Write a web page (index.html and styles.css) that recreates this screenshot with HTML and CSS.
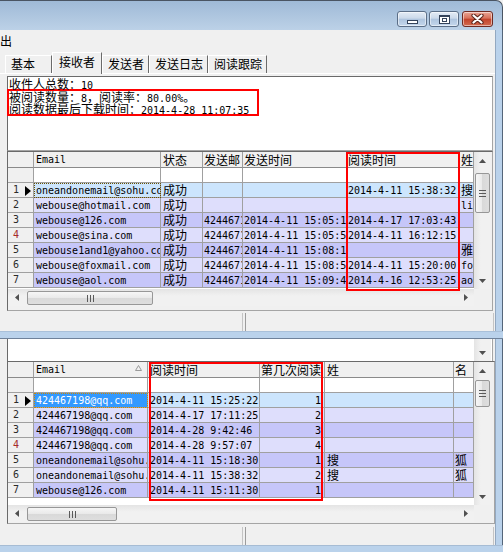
FILE: index.html
```html
<!DOCTYPE html>
<html>
<head>
<meta charset="utf-8">
<link rel="stylesheet" href="styles.css">
</head>
<body>
<div class="screen">
  <div class="win-top">
    <div class="titlebar">
      <div class="tbtn"><span class="g-min"></span></div>
      <div class="tbtn"><span class="g-max"></span></div>
      <div class="tbtn tclose"><svg width="13" height="10" viewBox="0 0 13 10"><path d="M2.5 1.5L10.5 8.5M10.5 1.5L2.5 8.5" stroke="#5a241b" stroke-width="4.2" stroke-linecap="round"/><path d="M2.5 1.5L10.5 8.5M10.5 1.5L2.5 8.5" stroke="#fff" stroke-width="2.2" stroke-linecap="round"/></svg></div>
    </div>
    <div class="winrow">
      <div class="client">
        <div class="menubar"><span>出</span></div>
        <div class="tabs">
          <div class="tab tab-first">基本</div>
          <div class="tab tab-sel">接收者</div>
          <div class="tab">发送者</div>
          <div class="tab">发送日志</div>
          <div class="tab">阅读跟踪</div>
        </div>
        <div class="sheet">
          <div class="info">
            <div class="ln">收件人总数：<span class="m">10</span></div>
            <div class="hl">
              <div class="ln">被阅读数量：<span class="m">8</span>，阅读率：<span class="m">80.00%</span>。</div>
              <div class="ln">阅读数据最后下载时间：<span class="m">2014-4-28 11:07:35</span></div>
            </div>
          </div>
          <div class="grid g1">
            <div class="grid-main g1-main">
              <div class="tbl">
                <div class="hdr">
                  <div class="c ind"></div>
                  <div class="c a-email">Email</div>
                  <div class="c a-state cn">状态</div>
                  <div class="c a-from cn">发送邮</div>
                  <div class="c a-sent cn">发送时间</div>
                  <div class="c a-read cn">阅读时间</div>
                  <div class="c a-last cn">姓</div>
                </div>
                <div class="flt">
                  <div class="c ind"></div>
                  <div class="c a-email"></div>
                  <div class="c a-state"></div>
                  <div class="c a-from"></div>
                  <div class="c a-sent"></div>
                  <div class="c a-read"></div>
                  <div class="c a-last"></div>
                </div>
                <div class="row r-sel">
                  <div class="c ind"><span class="rn">1</span><svg class="cur" width="6" height="10" viewBox="0 0 6 10"><path d="M0 0L6 5L0 10z" fill="#000"/></svg></div>
                  <div class="c a-email focus-soft">oneandonemail@sohu.com</div>
                  <div class="c a-state cn">成功</div>
                  <div class="c a-from"></div>
                  <div class="c a-sent"></div>
                  <div class="c a-read">2014-4-11 15:38:32</div>
                  <div class="c a-last cn">搜</div>
                </div>
                <div class="row r-a">
                  <div class="c ind"><span class="rn">2</span></div>
                  <div class="c a-email">webouse@hotmail.com</div>
                  <div class="c a-state cn">成功</div>
                  <div class="c a-from"></div>
                  <div class="c a-sent"></div>
                  <div class="c a-read"></div>
                  <div class="c a-last">li</div>
                </div>
                <div class="row r-b">
                  <div class="c ind"><span class="rn">3</span></div>
                  <div class="c a-email">webouse@126.com</div>
                  <div class="c a-state cn">成功</div>
                  <div class="c a-from">424467198@qq.com</div>
                  <div class="c a-sent">2014-4-11 15:05:12</div>
                  <div class="c a-read">2014-4-17 17:03:43</div>
                  <div class="c a-last"></div>
                </div>
                <div class="row r-a">
                  <div class="c ind"><span class="rn rn-red">4</span></div>
                  <div class="c a-email">webouse@sina.com</div>
                  <div class="c a-state cn">成功</div>
                  <div class="c a-from">424467198@qq.com</div>
                  <div class="c a-sent">2014-4-11 15:05:53</div>
                  <div class="c a-read">2014-4-11 16:12:15</div>
                  <div class="c a-last"></div>
                </div>
                <div class="row r-b">
                  <div class="c ind"><span class="rn">5</span></div>
                  <div class="c a-email">webouse1and1@yahoo.com</div>
                  <div class="c a-state cn">成功</div>
                  <div class="c a-from">424467198@qq.com</div>
                  <div class="c a-sent">2014-4-11 15:08:16</div>
                  <div class="c a-read"></div>
                  <div class="c a-last cn">雅</div>
                </div>
                <div class="row r-a">
                  <div class="c ind"><span class="rn">6</span></div>
                  <div class="c a-email">webouse@foxmail.com</div>
                  <div class="c a-state cn">成功</div>
                  <div class="c a-from">424467198@qq.com</div>
                  <div class="c a-sent">2014-4-11 15:08:54</div>
                  <div class="c a-read">2014-4-11 15:20:00</div>
                  <div class="c a-last">fo</div>
                </div>
                <div class="row r-b">
                  <div class="c ind"><span class="rn">7</span></div>
                  <div class="c a-email">webouse@aol.com</div>
                  <div class="c a-state cn">成功</div>
                  <div class="c a-from">424467198@qq.com</div>
                  <div class="c a-sent">2014-4-11 15:09:41</div>
                  <div class="c a-read">2014-4-16 12:53:25</div>
                  <div class="c a-last">ao</div>
                </div>
              </div>
              <div class="vscroll">
                <div class="sbtn"><svg width="7" height="4" viewBox="0 0 7 4"><path d="M3.5 0L7 4H0z" fill="#505050"/></svg></div>
                <div class="vtrack">
                  <div class="vthumb vt1"><svg width="7" height="7" viewBox="0 0 7 7"><path d="M0 0.5H7M0 3.5H7M0 6.5H7" stroke="#5a5a5a"/></svg></div>
                </div>
                <div class="sbtn"><svg width="7" height="4" viewBox="0 0 7 4"><path d="M0 0H7L3.5 4z" fill="#505050"/></svg></div>
              </div>
            </div>
            <div class="grid-hs">
              <div class="hscroll">
                <div class="sbtn-h"><svg width="4" height="7" viewBox="0 0 4 7"><path d="M0 3.5L4 0V7z" fill="#505050"/></svg></div>
                <div class="hthumb ht1"><svg width="7" height="7" viewBox="0 0 7 7"><path d="M0.5 0V7M3.5 0V7M6.5 0V7" stroke="#5a5a5a"/></svg></div>
                <div class="hfill"></div>
                <div class="sbtn-h"><svg width="4" height="7" viewBox="0 0 4 7"><path d="M0 0L4 3.5L0 7z" fill="#505050"/></svg></div>
              </div>
              <div class="corner"></div>
            </div>
            <div class="redmark rm1"></div>
          </div>
        </div>
        <div class="status"><div class="sp sp1"></div><div class="sp sp2"></div></div>
      </div>
      <div class="frame-r"></div>
    </div>
  </div>
  <div class="band"></div>
  <div class="win-bot">
    <div class="winrow">
      <div class="client">
        <div class="pane">
          <div class="memo">
            <div class="memo-txt"></div>
            <div class="memo-sb"><div class="sbtn"><svg width="7" height="4" viewBox="0 0 7 4"><path d="M0 0H7L3.5 4z" fill="#505050"/></svg></div></div>
          </div>
          <div class="grid g2">
            <div class="grid-main g2-main">
              <div class="tbl">
                <div class="hdr">
                  <div class="c ind"></div>
                  <div class="c b-email sorted">Email<svg width="7" height="6" viewBox="0 0 7 6"><path d="M3.5 0.5L6.5 5.5H0.5z" fill="none" stroke="#9a9a9a"/></svg></div>
                  <div class="c b-read cn">阅读时间</div>
                  <div class="c b-nth cn">第几次阅读</div>
                  <div class="c b-last cn">姓</div>
                  <div class="c b-first cn">名</div>
                </div>
                <div class="flt">
                  <div class="c ind"></div>
                  <div class="c b-email"></div>
                  <div class="c b-read"></div>
                  <div class="c b-nth"></div>
                  <div class="c b-last"></div>
                  <div class="c b-first"></div>
                </div>
                <div class="row r-sel">
                  <div class="c ind"><span class="rn">1</span><svg class="cur" width="6" height="10" viewBox="0 0 6 10"><path d="M0 0L6 5L0 10z" fill="#000"/></svg></div>
                  <div class="c b-email focus-hot">424467198@qq.com</div>
                  <div class="c b-read">2014-4-11 15:25:22</div>
                  <div class="c b-nth num">1</div>
                  <div class="c b-last"></div>
                  <div class="c b-first"></div>
                </div>
                <div class="row r-a">
                  <div class="c ind"><span class="rn">2</span></div>
                  <div class="c b-email">424467198@qq.com</div>
                  <div class="c b-read">2014-4-17 17:11:25</div>
                  <div class="c b-nth num">2</div>
                  <div class="c b-last"></div>
                  <div class="c b-first"></div>
                </div>
                <div class="row r-b">
                  <div class="c ind"><span class="rn">3</span></div>
                  <div class="c b-email">424467198@qq.com</div>
                  <div class="c b-read">2014-4-28 9:42:46</div>
                  <div class="c b-nth num">3</div>
                  <div class="c b-last"></div>
                  <div class="c b-first"></div>
                </div>
                <div class="row r-a">
                  <div class="c ind"><span class="rn rn-red">4</span></div>
                  <div class="c b-email">424467198@qq.com</div>
                  <div class="c b-read">2014-4-28 9:57:07</div>
                  <div class="c b-nth num">4</div>
                  <div class="c b-last"></div>
                  <div class="c b-first"></div>
                </div>
                <div class="row r-b">
                  <div class="c ind"><span class="rn">5</span></div>
                  <div class="c b-email">oneandonemail@sohu.com</div>
                  <div class="c b-read">2014-4-11 15:18:30</div>
                  <div class="c b-nth num">1</div>
                  <div class="c b-last cn">搜</div>
                  <div class="c b-first cn">狐</div>
                </div>
                <div class="row r-a">
                  <div class="c ind"><span class="rn">6</span></div>
                  <div class="c b-email">oneandonemail@sohu.com</div>
                  <div class="c b-read">2014-4-11 15:38:32</div>
                  <div class="c b-nth num">2</div>
                  <div class="c b-last cn">搜</div>
                  <div class="c b-first cn">狐</div>
                </div>
                <div class="row r-b">
                  <div class="c ind"><span class="rn">7</span></div>
                  <div class="c b-email">webouse@126.com</div>
                  <div class="c b-read">2014-4-11 15:11:30</div>
                  <div class="c b-nth num">1</div>
                  <div class="c b-last"></div>
                  <div class="c b-first"></div>
                </div>
              </div>
              <div class="vscroll">
                <div class="sbtn"><svg width="7" height="4" viewBox="0 0 7 4"><path d="M3.5 0L7 4H0z" fill="#505050"/></svg></div>
                <div class="vtrack">
                  <div class="vthumb vt2"><svg width="7" height="7" viewBox="0 0 7 7"><path d="M0 0.5H7M0 3.5H7M0 6.5H7" stroke="#5a5a5a"/></svg></div>
                </div>
                <div class="sbtn"><svg width="7" height="4" viewBox="0 0 7 4"><path d="M0 0H7L3.5 4z" fill="#505050"/></svg></div>
              </div>
            </div>
            <div class="grid-hs">
              <div class="hscroll">
                <div class="sbtn-h"><svg width="4" height="7" viewBox="0 0 4 7"><path d="M0 3.5L4 0V7z" fill="#505050"/></svg></div>
                <div class="hthumb ht2"><svg width="7" height="7" viewBox="0 0 7 7"><path d="M0.5 0V7M3.5 0V7M6.5 0V7" stroke="#5a5a5a"/></svg></div>
                <div class="hfill"></div>
                <div class="sbtn-h"><svg width="4" height="7" viewBox="0 0 4 7"><path d="M0 0L4 3.5L0 7z" fill="#505050"/></svg></div>
              </div>
              <div class="corner"></div>
            </div>
            <div class="redmark rm2"></div>
          </div>
        </div>
        <div class="status status-b"><div class="sp sp1"></div><div class="sp sp2"></div></div>
      </div>
      <div class="frame-r"></div>
    </div>
  </div>
  <div class="band-b"></div>
</div>
</body>
</html>
```

FILE: styles.css
```css
* { box-sizing: border-box; }
html, body { margin: 0; padding: 0; }
body {
  width: 503px;
  height: 552px;
  overflow: hidden;
  background: #f0f0f0;
  font-family: "Noto Sans CJK SC", sans-serif;
  font-size: 12px;
  color: #000;
}
.screen { width: 503px; height: 552px; display: flex; flex-direction: column; }

/* ---------- window chrome ---------- */
.win-top { height: 331px; display: flex; flex-direction: column; flex: none; }
.titlebar {
  height: 30px;
  flex: none;
  background: linear-gradient(#9fbad7, #bcd1e7);
  border-top: 1px solid #4a5563;
  border-right: 1px solid #4a5563;
  border-top-right-radius: 7px;
  display: flex;
  justify-content: flex-end;
  align-items: flex-start;
  padding: 10px 9px 0 0;
  gap: 2px;
}
.tbtn {
  width: 30px;
  height: 16px;
  border: 1px solid #5b6e87;
  border-radius: 3px;
  background: linear-gradient(#e4ecf6 0%, #cbd9ea 45%, #aec4de 50%, #c4d7ec 100%);
  display: flex;
  align-items: center;
  justify-content: center;
  box-shadow: inset 0 0 0 1px rgba(255,255,255,0.5);
}
.tclose {
  width: 31px;
  margin-left: 1px;
  border-color: #6e2a22;
  background: linear-gradient(#e9a595 0%, #d7705a 45%, #c2422a 50%, #d26a4f 100%);
}
.g-min {
  display: block;
  width: 11px;
  height: 4px;
  margin-top: 6px;
  background: #fff;
  border: 1px solid #34435a;
}
.g-max {
  display: block;
  width: 11px;
  height: 9px;
  background: #fff;
  border: 1px solid #34435a;
  border-top-width: 2px;
  position: relative;
}
.g-max::after {
  content: "";
  position: absolute;
  left: 2px;
  top: 1px;
  width: 3px;
  height: 2px;
  border: 1px solid #34435a;
}
.winrow { flex: 1; display: flex; }
.client { width: 495px; flex: none; display: flex; flex-direction: column; background: #f0f0f0; }
.frame-r {
  width: 8px;
  flex: none;
  background: #bad2eb;
  border-left: 1px solid #93a8c0;
  border-right: 1px solid #55667a;
}
.band {
  height: 8px;
  flex: none;
  background: #bad2eb;
  border-top: 1px solid #a9c0d9;
  border-bottom: 1px solid #6f829a;
}
.band-b { height: 7px; flex: none; background: #bad2eb; border-top: 1px solid #a6bcd4; }
.win-bot { height: 206px; flex: none; display: flex; flex-direction: column; }

/* ---------- menu and tabs ---------- */
.menubar { height: 22px; flex: none; padding-top: 2px; line-height: 17px; }
.tabs { height: 21px; flex: none; display: flex; align-items: flex-end; padding-left: 5px; }
.tab {
  height: 18px;
  padding: 0 4px 0 5px;
  border-top: 1px solid #fff;
  border-left: 1px solid #fff;
  border-right: 1px solid #6b6b6b;
  line-height: 16px;
  white-space: nowrap;
  background: #f0f0f0;
}
.tab-first { width: 47px; }
.tab-sel {
  height: 22px;
  margin-bottom: -1px;
  padding: 0 6px;
  line-height: 17px;
  position: relative;
  z-index: 1;
}
.sheet {
  flex: none;
  height: 238px;
  border-top: 1px solid #fff;
  padding: 2px 2px 0 7px;
  display: flex;
  flex-direction: column;
}

/* ---------- info box ---------- */
.info {
  height: 75px;
  flex: none;
  background: #fff;
  border: 1px solid #a5a5a5;
  border-top-color: #6a6a6a;
  border-left-color: #6a6a6a;
  padding-left: 1px;
}
.ln { height: 13px; line-height: 13px; white-space: nowrap; }
.m { font-family: "DejaVu Sans Mono", monospace; font-size: 10px; line-height: 10px; }
.hl {
  width: 252px;
  height: 27px;
  margin: -1px 0 0 -2px;
  border: 2px solid #ff0000;
  overflow: hidden;
}
.hl .ln { height: 11.5px; line-height: 12px; }

/* ---------- grids ---------- */
.grid {
  flex: none;
  position: relative;
  background: #f0f0f0;
  border: 1px solid #a5a5a5;
  border-top-color: #6a6a6a;
  border-left-color: #6a6a6a;
  display: flex;
  flex-direction: column;
  font-family: "DejaVu Sans Mono", "Noto Sans CJK SC", monospace;
  font-size: 10px;
}
.g1 { height: 160px; }
.g2 { height: 163px; }
.grid-main { display: flex; flex: none; }
.g1-main { height: 137px; }
.g2-main { height: 143px; }
.tbl { width: 466px; flex: none; background: #fff; overflow: hidden; }
.hdr, .flt, .row { display: flex; }
.hdr { height: 16px; }
.flt, .row { height: 15px; }
.c {
  flex: none;
  height: 100%;
  border-right: 1px solid #a0a0a0;
  border-bottom: 1px solid #a0a0a0;
  overflow: hidden;
  white-space: nowrap;
  padding-left: 1px;
  line-height: 15px;
}
.hdr .c { background: #f0f0f0; border-bottom-color: #8a8a8a; }
.flt .c { background: #fff; }
.c.cn { font-family: "Noto Sans CJK SC", sans-serif; font-size: 12px; line-height: 14px; }
.hdr .c.cn { line-height: 15px; }
.c.ind {
  width: 26px;
  background: #f0f0f0;
  padding-left: 5px;
  display: flex;
  align-items: center;
}
.flt .c.ind { background: #f0f0f0; }
.rn { width: 12px; flex: none; color: #2a2a2a; line-height: 14px; }
.rn-red { color: #a62a2a; }
.cur { display: block; margin-top: 1px; }

.r-sel .c { background: #cce5fd; }
.r-a .c { background: #dedefc; }
.r-b .c { background: #c6c6f9; }
.row .c.ind { background: #f0f0f0; }

.focus-soft { outline: 1px dotted #6b5200; outline-offset: -1px; padding-left: 2px; }
.r-sel .c.focus-hot {
  background: #3399ff;
  color: #fff;
  outline: 1px dotted #d08a00;
  outline-offset: -1px;
}

/* grid 1 columns */
.a-email { width: 127px; padding-left: 2px; }
.a-state { width: 42px; padding-left: 2px; }
.a-from { width: 40px; }
.a-sent { width: 104px; }
.a-read { width: 113px; }
.a-last { width: 14px; }

/* grid 2 columns */
.b-email { width: 114px; padding-left: 2px; }
.b-read { width: 112px; padding-left: 2px; }
.b-nth { width: 65px; }
.b-last { width: 129px; padding-left: 2px; }
.b-first { width: 20px; padding-left: 1px; }
.num { text-align: right; padding-right: 3px; }
.sorted { display: flex; justify-content: space-between; align-items: center; padding-right: 5px; }
.sorted svg { margin-top: -3px; }

/* ---------- scrollbars ---------- */
.vscroll {
  width: 17px;
  flex: none;
  display: flex;
  flex-direction: column;
  background: linear-gradient(to right, #e4e4e4, #f1f1f1 40%, #f1f1f1);
}
.sbtn { height: 17px; flex: none; display: flex; align-items: center; justify-content: center; }
.vtrack { flex: 1; padding: 0 1px; }
.vthumb {
  border: 1px solid #979797;
  border-radius: 2px;
  background: linear-gradient(to right, #f6f6f6, #e9e9e9 50%, #d9d9d9 50%, #dedede);
  display: flex;
  align-items: center;
  justify-content: center;
}
.vt1 { height: 40px; margin-top: 4px; }
.vt2 { height: 27px; margin-top: 1px; }
.grid-hs { display: flex; height: 17px; flex: none; }
.hscroll {
  width: 466px;
  flex: none;
  display: flex;
  align-items: stretch;
  background: linear-gradient(#e4e4e4, #f1f1f1 40%, #f1f1f1);
}
.sbtn-h { width: 17px; flex: none; display: flex; align-items: center; justify-content: center; }
.hthumb {
  margin: 2px 0 1px 2px;
  border: 1px solid #979797;
  border-radius: 2px;
  background: linear-gradient(#f6f6f6, #e9e9e9 50%, #d9d9d9 50%, #dedede);
  display: flex;
  align-items: center;
  justify-content: center;
}
.ht1 { width: 126px; }
.ht2 { width: 90px; }
.hfill { flex: 1; }
.corner { width: 17px; flex: none; background: #f0f0f0; }

/* ---------- red annotation boxes ---------- */
.redmark {
  position: absolute;
  border: 2px solid #ff0000;
  pointer-events: none;
}
.rm1 { left: 338px; top: 0; width: 114px; height: 139px; }
.rm2 { left: 141px; top: 0; width: 174px; height: 139px; }

/* ---------- lower pane ---------- */
.pane { flex: none; padding-left: 7px; display: flex; flex-direction: column; }
.memo {
  height: 22px;
  width: 486px;
  display: flex;
  background: #fff;
  border-left: 1px solid #6a6a6a;
  border-right: 1px solid #a5a5a5;
}
.memo-txt { width: 466px; flex: none; }
.memo-sb {
  width: 17px;
  flex: none;
  display: flex;
  flex-direction: column;
  justify-content: flex-end;
  background: linear-gradient(to right, #e4e4e4, #f1f1f1 40%, #f1f1f1);
}

/* ---------- status bars ---------- */
.status { height: 20px; flex: none; display: flex; gap: 2px; padding-top: 2px; }
.status-b { height: 21px; padding-top: 3px; }
.sp { height: 100%; }
.sp1 { width: 243px; border-right: 1px solid #c4c4c4; }
.sp2 { width: 249px; border-left: 1px solid #9c9c9c; border-right: 1px solid #c4c4c4; }
```
